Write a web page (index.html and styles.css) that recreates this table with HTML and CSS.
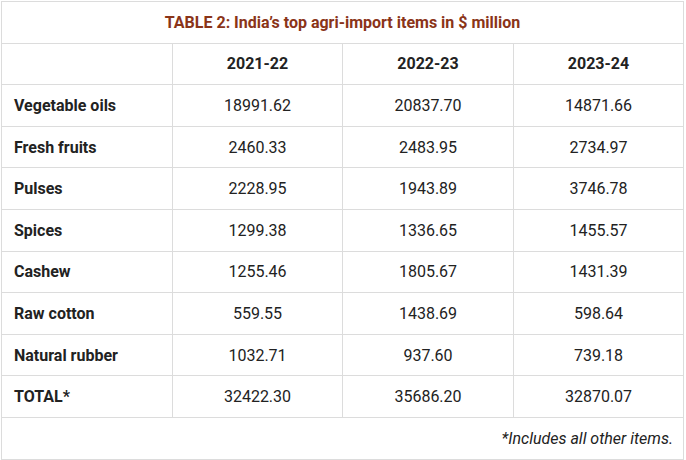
FILE: index.html
```html
<!DOCTYPE html>
<html>
<head>
<meta charset="utf-8">
<link rel="stylesheet" href="styles.css">
</head>
<body>
<table class="data">
  <colgroup><col class="c1"><col class="c2"><col class="c3"><col class="c4"></colgroup>
  <tr class="title-row"><td colspan="4" class="title">TABLE 2: India’s top agri-import items in $ million</td></tr>
  <tr class="head"><th></th><th>2021-22</th><th>2022-23</th><th>2023-24</th></tr>
  <tr><th class="label">Vegetable oils</th><td>18991.62</td><td>20837.70</td><td>14871.66</td></tr>
  <tr><th class="label">Fresh fruits</th><td>2460.33</td><td>2483.95</td><td>2734.97</td></tr>
  <tr><th class="label">Pulses</th><td>2228.95</td><td>1943.89</td><td>3746.78</td></tr>
  <tr><th class="label">Spices</th><td>1299.38</td><td>1336.65</td><td>1455.57</td></tr>
  <tr><th class="label">Cashew</th><td>1255.46</td><td>1805.67</td><td>1431.39</td></tr>
  <tr><th class="label">Raw cotton</th><td>559.55</td><td>1438.69</td><td>598.64</td></tr>
  <tr><th class="label">Natural rubber</th><td>1032.71</td><td>937.60</td><td>739.18</td></tr>
  <tr><th class="label">TOTAL*</th><td>32422.30</td><td>35686.20</td><td>32870.07</td></tr>
  <tr><td colspan="4" class="note">*Includes all other items.</td></tr>
</table>
</body>
</html>
```
FILE: styles.css
```css
html, body { margin: 0; padding: 0; background: #fff; }
body { padding: 1px 0 0 1px; }
.data {
  border-collapse: collapse;
  table-layout: fixed;
  width: 682px;
  font-family: Roboto, "Liberation Sans", sans-serif;
  font-size: 16px;
  color: #222;
}
.c1 { width: 171px; }
.c2 { width: 170px; }
.c3 { width: 171px; }
.c4 { width: 170px; }
.data td, .data th {
  border: 1px solid #dcdcdc;
  height: 40px;
  padding: 0;
  text-align: center;
  font-weight: 400;
}
.data tr { height: 41.6px; }
.data th { font-weight: 700; }
.data th.label { text-align: left; padding-left: 12px; }
.title { color: #8a3418; font-weight: 700 !important; font-size: 16px; }
.note { text-align: right !important; font-style: italic; padding-right: 10px !important; }
```
